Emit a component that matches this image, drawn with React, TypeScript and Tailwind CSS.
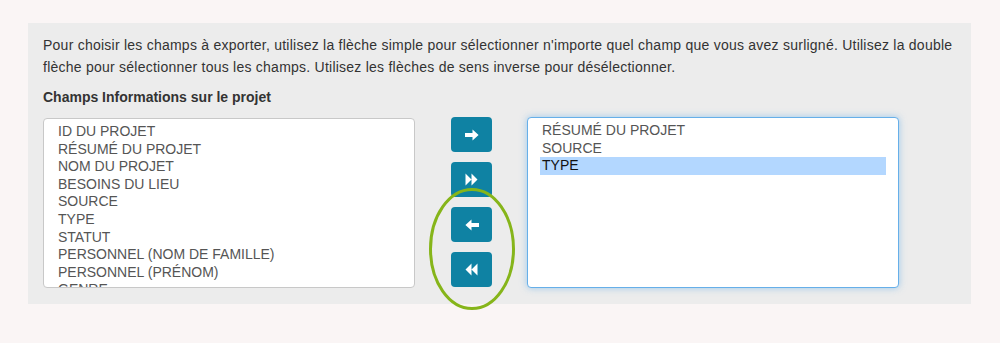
import React from "react"

const leftFields = [
  "ID DU PROJET",
  "RÉSUMÉ DU PROJET",
  "NOM DU PROJET",
  "BESOINS DU LIEU",
  "SOURCE",
  "TYPE",
  "STATUT",
  "PERSONNEL (NOM DE FAMILLE)",
  "PERSONNEL (PRÉNOM)",
  "GENRE",
]

const rightFields = ["RÉSUMÉ DU PROJET", "SOURCE", "TYPE"]

function ArrowRight() {
  return (
    <svg width="14" height="12" viewBox="0 0 14 12" fill="white">
      <path d="M0 4h7.5V0.4L13.6 6 7.5 11.6V8H0z" />
    </svg>
  )
}

function ArrowLeft() {
  return (
    <svg width="14" height="12" viewBox="0 0 14 12" fill="white">
      <path d="M14 4H6.5V0.4L0.4 6 6.5 11.6V8H14z" />
    </svg>
  )
}

function Forward() {
  return (
    <svg width="13" height="13" viewBox="0 0 13 13" fill="white">
      <path d="M0.5 0.5L6.5 6.5 0.5 12.5z M6.5 0.5L12.5 6.5 6.5 12.5z" />
    </svg>
  )
}

function Backward() {
  return (
    <svg width="13" height="13" viewBox="0 0 13 13" fill="white">
      <path d="M12.5 0.5L6.5 6.5l6 6z M6.5 0.5L0.5 6.5 6.5 12.5z" />
    </svg>
  )
}

function MoveButton({ children }: { children: React.ReactNode }) {
  return (
    <button className="w-[41px] h-[35px] rounded-[4px] bg-[#0f82a3] flex items-center justify-center">
      {children}
    </button>
  )
}

export default function App() {
  return (
    <div className="min-h-[343px] bg-[#faf5f5] pt-[23px] px-[28px] font-['Liberation_Sans',Arial,sans-serif]">
      <div className="w-[943px] h-[281px] bg-[#ececec] pt-[11px] px-[15px] pb-[16px]">
        <p className="text-[14px] leading-[22px] tracking-[0.24px] text-[#333]">
          Pour choisir les champs à exporter, utilisez la flèche simple pour sélectionner n'importe quel champ que vous avez surligné. Utilisez la double
          flèche pour sélectionner tous les champs. Utilisez les flèches de sens inverse pour désélectionner.
        </p>
        <h3 className="mt-[9px] text-[14px] leading-[20px] font-bold text-[#333]">Champs Informations sur le projet</h3>

        <div className="mt-[10px] flex items-start">
          <div className="w-[372px] h-[170px] mt-[1px] bg-white border border-[#c8c8c8] rounded-[4px] overflow-hidden px-[12px] pt-[4px]">
            {leftFields.map((f) => (
              <div key={f} className="pl-[2px] text-[14px] leading-[17.6px] text-[#555] whitespace-nowrap">
                {f}
              </div>
            ))}
          </div>

          <div className="relative ml-[36px] flex flex-col gap-[10px]">
            <MoveButton>
              <ArrowRight />
            </MoveButton>
            <MoveButton>
              <Forward />
            </MoveButton>
            <MoveButton>
              <ArrowLeft />
            </MoveButton>
            <MoveButton>
              <Backward />
            </MoveButton>
            <svg className="absolute left-[-23px] top-[70px] pointer-events-none" width="88" height="124" viewBox="0 0 88 124">
              <ellipse cx="44" cy="62" rx="41.5" ry="59.5" fill="none" stroke="#86b51a" strokeWidth="3" />
            </svg>
          </div>

          <div className="ml-[35px] w-[372px] h-[171px] bg-white border border-[#66afe9] rounded-[4px] shadow-[0_0_7px_rgba(102,175,233,0.6)] overflow-hidden px-[12px] pt-[4px]">
            {rightFields.map((f) => (
              <div
                key={f}
                className={`pl-[2px] text-[14px] leading-[17.7px] whitespace-nowrap ${
                  f === "TYPE" ? "bg-[#b3d7ff] text-[#111]" : "text-[#555]"
                }`}
              >
                {f}
              </div>
            ))}
          </div>
        </div>
      </div>
    </div>
  )
}
